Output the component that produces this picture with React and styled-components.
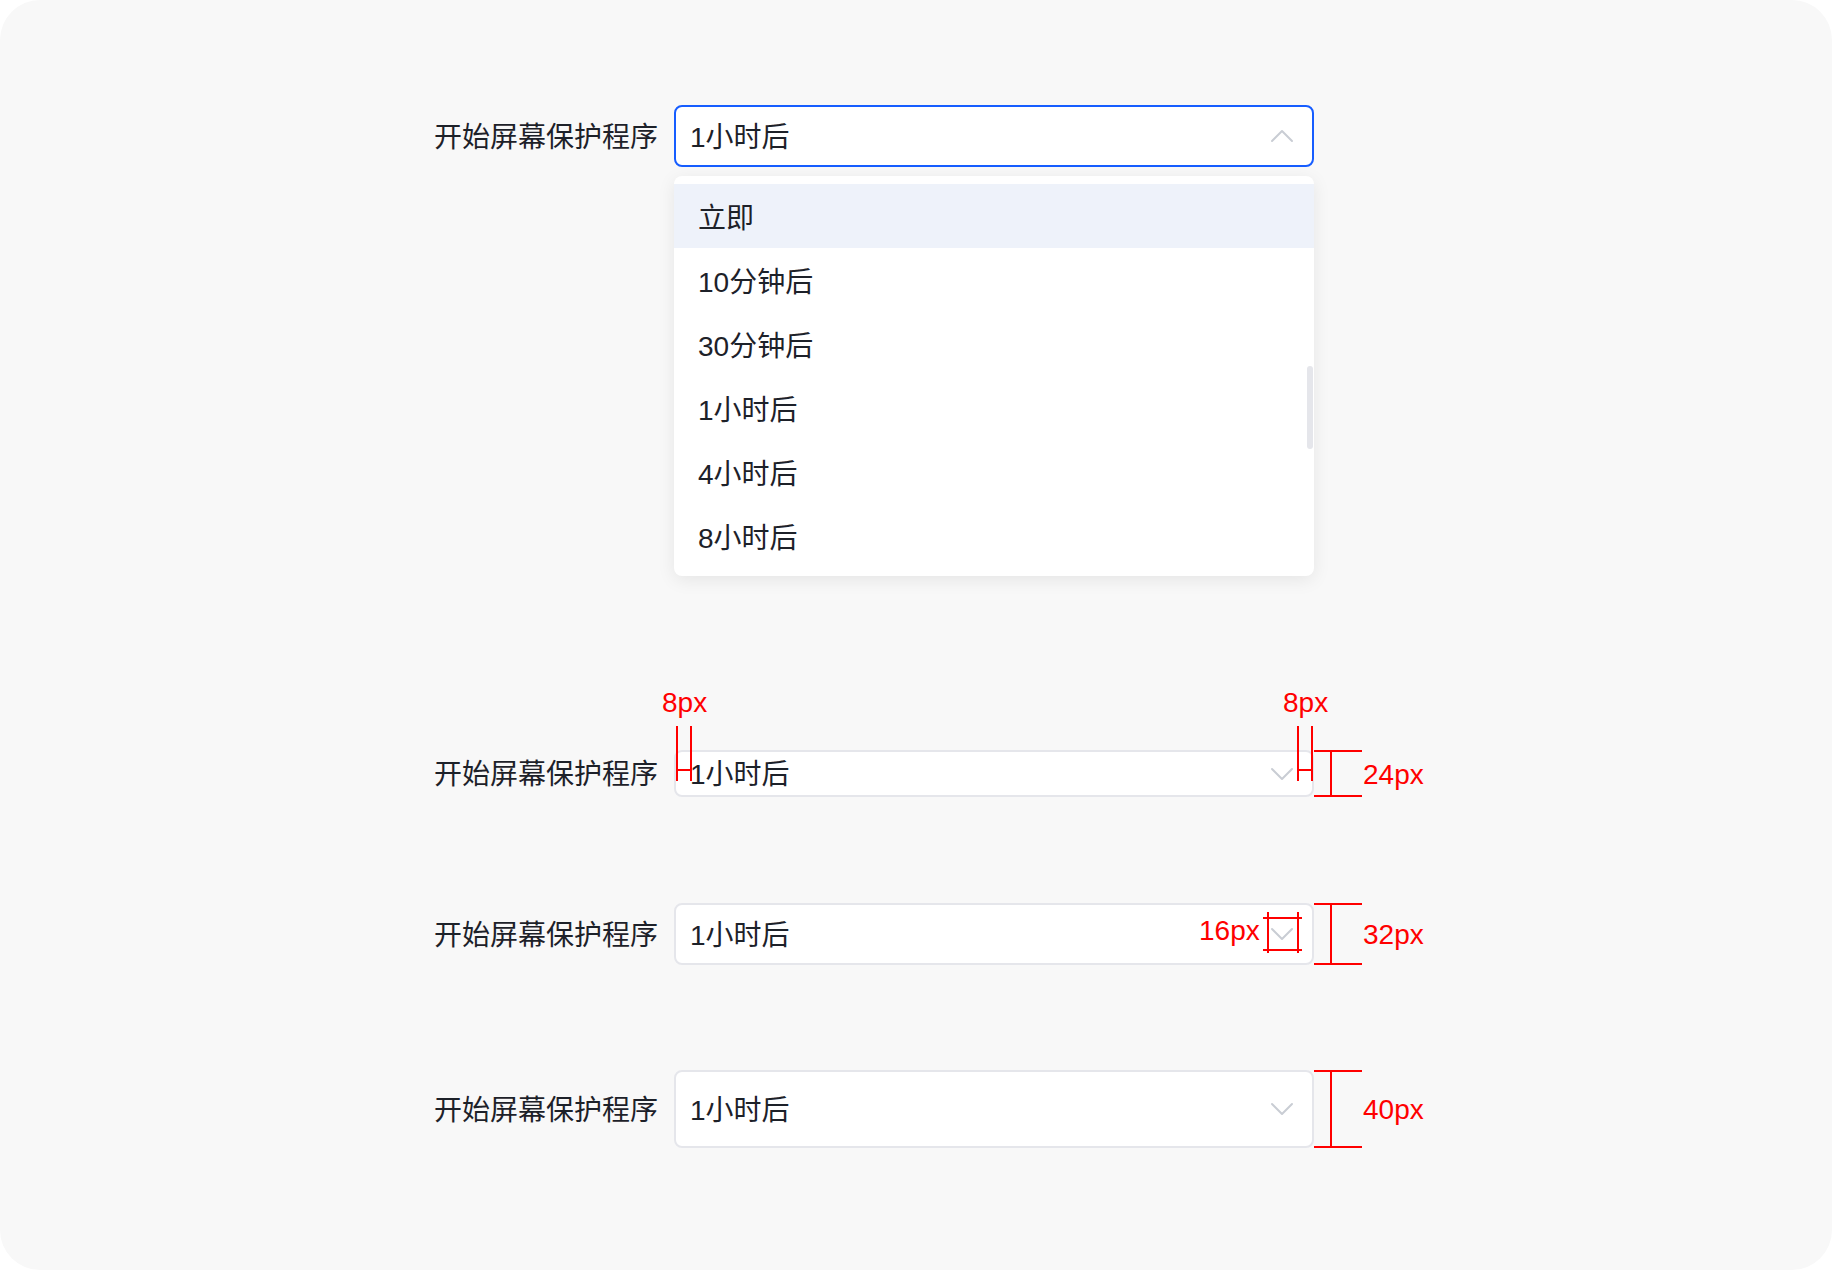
import React from "react";
import styled, { createGlobalStyle } from "styled-components";

const GlobalStyle = createGlobalStyle`
  html, body {
    margin: 0;
    padding: 0;
    background: #ffffff;
  }
  body {
    font-family: "Liberation Sans", "Noto Sans CJK SC", sans-serif;
  }
`;

const RED = "#ff0000";

const Page = styled.div`
  box-sizing: border-box;
  width: 1832px;
  height: 1270px;
  background: #f8f8f8;
  border-radius: 40px;
  padding: 105px 0 0 434px;
  display: flex;
  flex-direction: column;
  overflow: hidden;
`;

const Row = styled.div`
  display: flex;
  align-items: center;
  gap: 16px;
  margin-top: ${(p) => p.$mt || 0}px;
`;

const Label = styled.span`
  width: 224px;
  font-size: 28px;
  line-height: 36px;
  padding-top: 3px;
  color: #1d2129;
  white-space: nowrap;
`;

const Field = styled.div`
  position: relative;
  width: 640px;
`;

const SelectBox = styled.div`
  box-sizing: border-box;
  width: 100%;
  height: ${(p) => p.$h}px;
  border: 2px solid ${(p) => (p.$active ? "#165dff" : "#e5e6eb")};
  border-radius: 8px;
  background: #ffffff;
  display: flex;
  align-items: center;
  padding: 0 14px;
`;

const Value = styled.span`
  flex: 1;
  font-size: 28px;
  line-height: 36px;
  padding-top: 3px;
  color: #1d2129;
  white-space: nowrap;
`;

const Arrow = styled.svg`
  width: 32px;
  height: 32px;
  flex: none;
  display: block;
`;

const Chevron = ({ up }) => (
  <Arrow viewBox="0 0 32 32">
    <path
      d={up ? "M6 21 L16 11 L26 21" : "M6 11 L16 21 L26 11"}
      fill="none"
      stroke="#c9cdd4"
      strokeWidth="2"
      strokeLinecap="round"
      strokeLinejoin="round"
    />
  </Arrow>
);

const Dropdown = styled.div`
  position: absolute;
  top: calc(100% + 9px);
  left: 0;
  width: 100%;
  box-sizing: border-box;
  background: #ffffff;
  border-radius: 8px;
  padding: 8px 0;
  box-shadow: 0 4px 18px rgba(0, 0, 0, 0.08);
  z-index: 2;
`;

const Option = styled.div`
  height: 64px;
  display: flex;
  align-items: center;
  padding-left: 24px;
  font-size: 28px;
  color: #1d2129;
  background: ${(p) => (p.$hover ? "#eef2fa" : "transparent")};
`;

const ScrollThumb = styled.div`
  position: absolute;
  right: 1px;
  top: 190px;
  width: 6px;
  height: 83px;
  border-radius: 3px;
  background: #e5e6eb;
`;

/* annotation marks lying over the selects */
const VLine = styled.div`
  position: absolute;
  left: ${(p) => p.$x}px;
  top: ${(p) => p.$y}px;
  width: 2px;
  height: ${(p) => p.$len}px;
  background: ${RED};
`;

const HLine = styled.div`
  position: absolute;
  left: ${(p) => p.$x}px;
  top: ${(p) => p.$y}px;
  height: 2px;
  width: ${(p) => p.$len}px;
  background: ${RED};
`;

const Note = styled.span`
  position: absolute;
  left: ${(p) => p.$x}px;
  top: ${(p) => p.$y}px;
  font-family: "Liberation Sans", sans-serif;
  font-size: 28px;
  line-height: 28px;
  color: ${RED};
  white-space: nowrap;
`;

const HeightMark = ({ h, text }) => (
  <>
    <HLine $x={640} $y={0} $len={48} />
    <HLine $x={640} $y={h - 2} $len={48} />
    <VLine $x={656} $y={0} $len={h} />
    <Note $x={689} $y={Math.round(h / 2) - 13}>{text}</Note>
  </>
);

const options = ["立即", "10分钟后", "30分钟后", "1小时后", "4小时后", "8小时后"];
const LABEL = "开始屏幕保护程序";
const VALUE = "1小时后";

export default function App() {
  return (
    <>
      <GlobalStyle />
      <Page>
        <Row>
          <Label>{LABEL}</Label>
          <Field>
            <SelectBox $h={62} $active>
              <Value>{VALUE}</Value>
              <Chevron up />
            </SelectBox>
            <Dropdown>
              {options.map((o, i) => (
                <Option key={o} $hover={i === 0}>
                  {o}
                </Option>
              ))}
              <ScrollThumb />
            </Dropdown>
          </Field>
        </Row>

        <Row $mt={583}>
          <Label>{LABEL}</Label>
          <Field>
            <SelectBox $h={47}>
              <Value>{VALUE}</Value>
              <Chevron />
            </SelectBox>
            <VLine $x={2} $y={-24} $len={55} />
            <VLine $x={16} $y={-24} $len={55} />
            <HLine $x={2} $y={19} $len={16} />
            <Note $x={-12} $y={-61}>8px</Note>
            <VLine $x={623} $y={-24} $len={55} />
            <VLine $x={637} $y={-24} $len={55} />
            <HLine $x={623} $y={19} $len={16} />
            <Note $x={609} $y={-61}>8px</Note>
            <HeightMark h={47} text="24px" />
          </Field>
        </Row>

        <Row $mt={106}>
          <Label>{LABEL}</Label>
          <Field>
            <SelectBox $h={62}>
              <Value>{VALUE}</Value>
              <Chevron />
            </SelectBox>
            <VLine $x={593} $y={9} $len={41} />
            <VLine $x={623} $y={9} $len={41} />
            <HLine $x={589} $y={14} $len={39} />
            <HLine $x={589} $y={46} $len={39} />
            <Note $x={525} $y={14}>16px</Note>
            <HeightMark h={62} text="32px" />
          </Field>
        </Row>

        <Row $mt={105}>
          <Label>{LABEL}</Label>
          <Field>
            <SelectBox $h={78}>
              <Value>{VALUE}</Value>
              <Chevron />
            </SelectBox>
            <HeightMark h={78} text="40px" />
          </Field>
        </Row>
      </Page>
    </>
  );
}
